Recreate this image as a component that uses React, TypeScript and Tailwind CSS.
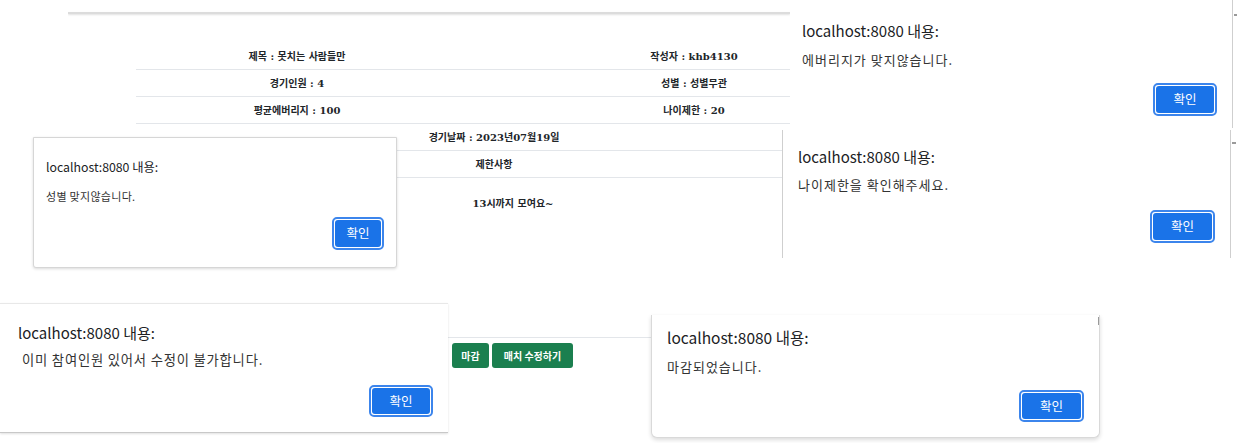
import React from 'react';

type AlertProps = {
  className: string;
  titleClass: string;
  messageClass: string;
  buttonRowClass: string;
  buttonClass: string;
  message: string;
};

const ConfirmButton: React.FC<{ className: string }> = ({ className }) => (
  <button
    type="button"
    className={`rounded-[5px] border-2 border-[#3c85ec] bg-white p-px ${className}`}
  >
    <span className="flex h-full w-full items-center justify-center rounded-[3px] bg-[#1a73e8] text-[12.5px] leading-none text-white">
      확인
    </span>
  </button>
);

const AlertDialog: React.FC<AlertProps> = ({ className, titleClass, messageClass, buttonRowClass, buttonClass, message }) => (
  <div className={`absolute flex flex-col bg-white text-[#202124] font-['Noto_Sans_CJK_KR',sans-serif] ${className}`}>
    <p className={`whitespace-nowrap ${titleClass}`}>localhost:8080 내용:</p>
    <p className={`whitespace-nowrap text-[#333] ${messageClass}`}>{message}</p>
    <div className={`flex justify-end ${buttonRowClass}`}>
      <ConfirmButton className={buttonClass} />
    </div>
  </div>
);

const Cell: React.FC<{ children: React.ReactNode; className?: string }> = ({ children, className = '' }) => (
  <div className={`flex items-center justify-center whitespace-nowrap ${className}`}>{children}</div>
);

export default function App() {
  return (
    <div className="relative h-[443px] w-[1237px] overflow-hidden bg-white">
      {/* match detail page fragment */}
      <div className="absolute left-[68px] top-0 h-[300px] w-[722px] overflow-hidden">
        <div className="mt-[12px] h-[2px] bg-[#dcdcdc] shadow-[0_1px_2px_rgba(0,0,0,0.12)]" />
        <div className="ml-[68px] mt-[29px] w-[716px] text-[10px] font-bold text-[#212529] font-['DejaVu_Serif','Noto_Sans_CJK_KR',serif]">
          <div className="grid h-[27px] grid-cols-[322px_394px] border-b border-[#e3e6ea]">
            <Cell>제목 : 못치는 사람들만</Cell>
            <Cell className="pl-[78px]">작성자 : khb4130</Cell>
          </div>
          <div className="grid h-[27px] grid-cols-[322px_394px] border-b border-[#e3e6ea]">
            <Cell>경기인원 : 4</Cell>
            <Cell className="pl-[78px]">성별 : 성별무관</Cell>
          </div>
          <div className="grid h-[27px] grid-cols-[322px_394px] border-b border-[#e3e6ea]">
            <Cell>평균에버리지 : 100</Cell>
            <Cell className="pl-[78px]">나이제한 : 20</Cell>
          </div>
          <Cell className="h-[27px] border-b border-[#e3e6ea]">경기날짜 : 2023년07월19일</Cell>
          <Cell className="h-[27px] border-b border-[#e3e6ea]">제한사항</Cell>
          <Cell className="h-[50px] pl-[38px]">13시까지 모여요~</Cell>
        </div>
      </div>

      {/* bottom page fragment with buttons */}
      <div className="absolute left-[448px] top-[303px] h-[140px] w-[203px]">
        <div className="h-[35px] border-b border-[#e3e6ea]" />
        <div className="ml-[4px] mt-[5px] flex gap-[3px] text-[10px] font-bold text-white font-['Noto_Sans_CJK_KR',sans-serif]">
          <span className="flex h-[25px] w-[37px] items-center justify-center rounded-[3px] bg-[#1b7f4f]">마감</span>
          <span className="flex h-[25px] w-[81px] items-center justify-center rounded-[3px] bg-[#1b7f4f]">매치 수정하기</span>
        </div>
      </div>

      <AlertDialog
        className="left-[33px] top-[137px] h-[131px] w-[364px] rounded-b-[3px] border border-[#d6d6d6] pl-[12px] pr-[12px] pt-[20px] shadow-[0_1px_3px_rgba(0,0,0,0.15)]"
        titleClass="text-[12.3px] leading-[18px]"
        messageClass="mt-[13px] text-[11px] leading-[14px] tracking-[0.3px]"
        buttonRowClass="mt-[14px]"
        buttonClass="h-[33px] w-[52px]"
        message="성별 맞지않습니다."
      />

      <AlertDialog
        className="left-[790px] top-0 h-[128px] w-[443px] border-r border-[#cfcfcf] pl-[12px] pr-[15px] pt-[20px]"
        titleClass="text-[15px] leading-[22px]"
        messageClass="mt-[10px] text-[13px] leading-[16px] tracking-[1px]"
        buttonRowClass="mt-[15px]"
        buttonClass="h-[33px] w-[64px]"
        message="에버리지가 맞지않습니다."
      />

      <AlertDialog
        className="left-[782px] top-[130px] h-[128px] w-[449px] border-x border-[#cfcfcf] pl-[15px] pr-[15px] pt-[16px]"
        titleClass="text-[15px] leading-[22px]"
        messageClass="mt-[8px] text-[13px] leading-[18px] tracking-[1px]"
        buttonRowClass="mt-[16px]"
        buttonClass="h-[33px] w-[65px]"
        message="나이제한을 확인해주세요."
      />

      <AlertDialog
        className="left-0 top-[303px] h-[130px] w-[448px] border-y border-t-[#e8e8e8] border-b-[#c8c8c8] pl-[18px] pr-[15px] pt-[18px] shadow-[0_1px_2px_rgba(0,0,0,0.12)]"
        titleClass="text-[15px] leading-[22px]"
        messageClass="ml-[4px] mt-[7px] text-[13.3px] leading-[18px] tracking-[0.8px]"
        buttonRowClass="mt-[16px]"
        buttonClass="h-[32px] w-[64px]"
        message="이미 참여인원 있어서 수정이 불가합니다."
      />

      <AlertDialog
        className="left-[651px] top-[315px] h-[123px] w-[449px] rounded-b-[6px] border-x border-b border-[#d9d9d9] pl-[15px] pr-[15px] pt-[11px] shadow-[0_2px_4px_rgba(0,0,0,0.14)]"
        titleClass="text-[15.5px] leading-[22px]"
        messageClass="mt-[10px] text-[13px] leading-[18px] tracking-[1px]"
        buttonRowClass="mt-[14px]"
        buttonClass="h-[32px] w-[65px]"
        message="마감되었습니다."
      />

      {/* small edge artifacts from the cropped captures */}
      <span className="absolute left-[1234px] top-[14px] h-[2px] w-[3px] bg-[#9a9a9a]" />
      <span className="absolute left-[1232px] top-[142px] h-[2px] w-[4px] bg-[#9a9a9a]" />
      <span className="absolute left-[1098px] top-[317px] h-[8px] w-px bg-[#9a9a9a]" />
    </div>
  );
}
